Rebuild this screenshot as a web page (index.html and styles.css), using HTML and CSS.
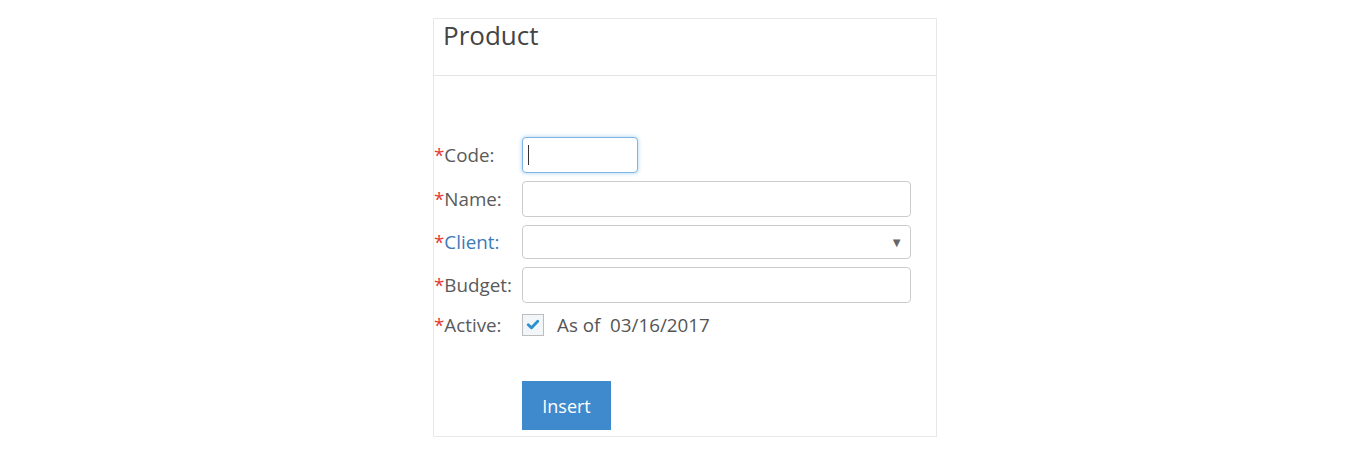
FILE: index.html
```html
<!DOCTYPE html>
<html lang="en">
<head>
<meta charset="utf-8">
<title>Product</title>
<link rel="stylesheet" href="styles.css">
</head>
<body>
<div class="panel">
  <div class="panel-header">
    <h1 class="panel-title">Product</h1>
  </div>
  <form class="panel-body">
    <div class="row">
      <label class="lbl"><span class="req">*</span>Code:</label>
      <span class="code-wrap">
        <input class="field field-code focused" type="text">
        <span class="caret"></span>
      </span>
    </div>
    <div class="row">
      <label class="lbl"><span class="req">*</span>Name:</label>
      <input class="field field-wide" type="text">
    </div>
    <div class="row">
      <label class="lbl lbl-link"><span class="req">*</span>Client:</label>
      <span class="select-wrap">
        <select class="field field-wide field-select"><option></option></select>
        <span class="arrow">&#9660;</span>
      </span>
    </div>
    <div class="row">
      <label class="lbl"><span class="req">*</span>Budget:</label>
      <input class="field field-wide" type="text">
    </div>
    <div class="row row-check">
      <label class="lbl"><span class="req">*</span>Active:</label>
      <span class="checkbox">
        <svg width="21" height="21" viewBox="0 0 21 21"><path d="M5.5 10.8 L9 14 L15.5 7.2" fill="none" stroke="#2e8fcf" stroke-width="3" stroke-linecap="round" stroke-linejoin="round"/></svg>
      </span>
      <span class="asof">As of&nbsp; 03/16/2017</span>
    </div>
    <div class="actions">
      <button type="button" class="btn">Insert</button>
    </div>
  </form>
</div>
</body>
</html>
```

FILE: styles.css
```css
html, body {
  margin: 0;
  padding: 0;
  background: #ffffff;
}

body {
  font-family: "Open Sans", "Liberation Sans", sans-serif;
  color: #555555;
}

.panel {
  width: 502px;
  margin: 18px auto 0;
  border: 1px solid #e8e8e8;
  position: relative;
  left: 1px;
}

.panel-header {
  height: 57px;
  box-sizing: border-box;
  border-bottom: 1px solid #e4e4e4;
  padding: 3px 9px 0;
}

.panel-title {
  margin: 0;
  font-size: 26px;
  font-weight: 400;
  line-height: 26px;
  color: #444444;
}

.panel-body {
  margin: 0;
  padding: 61px 25px 6px 0;
  display: flex;
  flex-direction: column;
  gap: 8px;
}

.row {
  display: flex;
  align-items: center;
}

.lbl {
  width: 88px;
  flex: none;
  font-size: 18.8px;
  color: #5a5a5a;
  white-space: nowrap;
}

.lbl-link {
  color: #3b7ab8;
}

.req {
  color: #e53935;
}

.field {
  box-sizing: border-box;
  height: 36px;
  border: 1px solid #cccccc;
  border-radius: 4px;
  background: #ffffff;
  font-family: inherit;
  font-size: 16px;
  padding: 0 8px;
  margin: 0;
  outline: none;
}

.field-wide {
  width: 389px;
}

.field-select {
  height: 34px;
  appearance: none;
  -webkit-appearance: none;
}

.code-wrap,
.select-wrap {
  position: relative;
  display: flex;
}

.field-code {
  width: 116px;
}

.focused {
  border-color: #7fb6e6;
  box-shadow: 0 0 4px rgba(102, 175, 233, 0.6);
}

.caret {
  position: absolute;
  left: 6px;
  top: 8px;
  width: 1px;
  height: 20px;
  background: #333333;
}

.arrow {
  position: absolute;
  right: 8px;
  top: 8px;
  font-size: 13px;
  color: #666666;
  pointer-events: none;
}

.row-check {
  height: 27px;
}

.checkbox {
  box-sizing: border-box;
  width: 22px;
  height: 22px;
  border: 1px solid #bdbdbd;
  background: #f3f6f9;
  display: flex;
  align-items: center;
  justify-content: center;
  flex: none;
}

.asof {
  margin-left: 13px;
  font-size: 18.8px;
  color: #555555;
}

.actions {
  padding-left: 88px;
  margin-top: 35px;
  display: flex;
}

.btn {
  width: 89px;
  height: 49px;
  border: none;
  background: #3f8acd;
  color: #ffffff;
  font-family: inherit;
  font-size: 18px;
  padding: 0;
  cursor: pointer;
}
```
